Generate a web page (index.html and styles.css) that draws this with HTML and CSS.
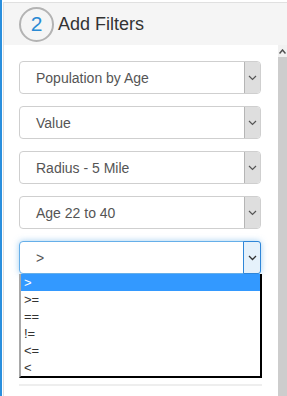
FILE: index.html
```html
<!DOCTYPE html>
<html>
    <head>
        <meta charset="utf-8">
        <title>Add Filters</title>
        <link rel="stylesheet" href="styles.css">
    </head>
    <body>
        <div class="frame">
            <div class="panel">
                <div class="panel-heading">
                    <span class="step">2</span>
                    <span class="title">Add Filters</span>
                </div>
                <div class="panel-row">
                    <div class="panel-body">
                        <div class="select">
                            <span class="select-text">Population by Age</span>
                            <span class="select-btn"><svg width="9" height="6" viewBox="0 0 9 6"><path d="M1 1 L4.5 4.5 L8 1" fill="none" stroke="#555" stroke-width="1.2"/></svg></span>
                        </div>
                        <div class="select">
                            <span class="select-text">Value</span>
                            <span class="select-btn"><svg width="9" height="6" viewBox="0 0 9 6"><path d="M1 1 L4.5 4.5 L8 1" fill="none" stroke="#555" stroke-width="1.2"/></svg></span>
                        </div>
                        <div class="select">
                            <span class="select-text">Radius - 5 Mile</span>
                            <span class="select-btn"><svg width="9" height="6" viewBox="0 0 9 6"><path d="M1 1 L4.5 4.5 L8 1" fill="none" stroke="#555" stroke-width="1.2"/></svg></span>
                        </div>
                        <div class="select">
                            <span class="select-text">Age 22 to 40</span>
                            <span class="select-btn"><svg width="9" height="6" viewBox="0 0 9 6"><path d="M1 1 L4.5 4.5 L8 1" fill="none" stroke="#555" stroke-width="1.2"/></svg></span>
                        </div>
                        <div class="select-wrap">
                            <div class="select open">
                                <span class="select-text">&gt;</span>
                                <span class="select-btn"><svg width="9" height="6" viewBox="0 0 9 6"><path d="M1 1 L4.5 4.5 L8 1" fill="none" stroke="#333" stroke-width="1.3"/></svg></span>
                            </div>
                            <ul class="options">
                                <li class="active">&gt;</li>
                                <li>&gt;=</li>
                                <li>==</li>
                                <li>!=</li>
                                <li>&lt;=</li>
                                <li>&lt;</li>
                            </ul>
                        </div>
                        <div class="rule"></div>
                    </div>
                    <div class="scrollbar">
                        <div class="scroll-up"><svg width="7" height="5" viewBox="0 0 7 5"><path d="M0.5 4.5 L3.5 1 L6.5 4.5" fill="none" stroke="#505050" stroke-width="1.5"/></svg></div>
                        <div class="scroll-track"></div>
                    </div>
                </div>
            </div>
        </div>
    </body>
</html>
```

FILE: styles.css
```css
body {
    margin: 0;
    font-family: 'Liberation Sans', Arial, sans-serif;
    background-color: #fff;
    color: #333;
}

.frame {
    height: 396px;
    border-left: 2px solid #2a8fdd; /* 左の青い線 */
    padding-left: 1px;
    padding-top: 2px;
    box-sizing: border-box;
    overflow: hidden;
}

.panel {
    height: 100%;
    display: flex;
    flex-direction: column;
    border-left: 1px solid #e0e0e0;
    border-top: 1px solid #e0e0e0;
}

.panel-heading {
    height: 42px;
    background-color: #f5f5f5;
    display: flex;
    align-items: center;
    padding-left: 15px;
}

.step {
    width: 31px;
    height: 31px;
    border: 2px solid #b3b3b3;
    border-radius: 50%;
    display: flex;
    align-items: center;
    justify-content: center;
    color: #2a8ad4;
    font-size: 21px;
    margin-right: 4px;
}

.title {
    font-size: 18px;
    color: #333;
}

.panel-row {
    flex: 1;
    display: flex;
}

.panel-body {
    flex: 1;
    padding: 16px 16px 0 15px;
    display: flex;
    flex-direction: column;
    gap: 12px;
}

.select {
    width: 242px;
    height: 33px;
    box-sizing: border-box;
    border: 1px solid #cfcfcf;
    border-radius: 4px;
    background-color: #fff;
    display: flex;
    align-items: stretch;
}

.select-text {
    flex: 1;
    display: flex;
    align-items: center;
    padding-left: 16px;
    font-size: 14px;
    color: #555;
}

.select-btn {
    width: 15px;
    background-color: #dedede;
    border-left: 1px solid #b5b5b5;
    border-radius: 0 3px 3px 0;
    display: flex;
    align-items: center;
    justify-content: center;
}

.select.open {
    border-color: #66afe9;
    box-shadow: 0 0 6px rgba(102, 175, 233, 0.6);
}

.select.open .select-btn {
    background-color: #e5f1fb;
    border: 1px solid #2f86d8;
    margin: -1px -1px -1px 0;
    width: 16px;
}

.options {
    list-style: none;
    margin: 0;
    padding: 0;
    width: 243px;
    box-sizing: border-box;
    border-left: 2px solid #a8a8a8;
    border-right: 2px solid #000;
    border-bottom: 2px solid #000;
    background-color: #fff;
}

.options li {
    height: 17px;
    line-height: 17px;
    padding-left: 3px;
    font-size: 13px;
    color: #333;
}

.options li.active {
    background-color: #3399ff;
    color: #fff;
}

.rule {
    width: 243px;
    height: 0;
    border-top: 2px solid #eee;
    margin-top: -6px;
}

.scrollbar {
    width: 9px;
    display: flex;
    flex-direction: column;
}

.scroll-up {
    height: 12px;
    background-color: #f1f1f1;
    display: flex;
    align-items: center;
    justify-content: center;
}

.scroll-track {
    flex: 1;
    background-color: #cdcdcd;
}
```
